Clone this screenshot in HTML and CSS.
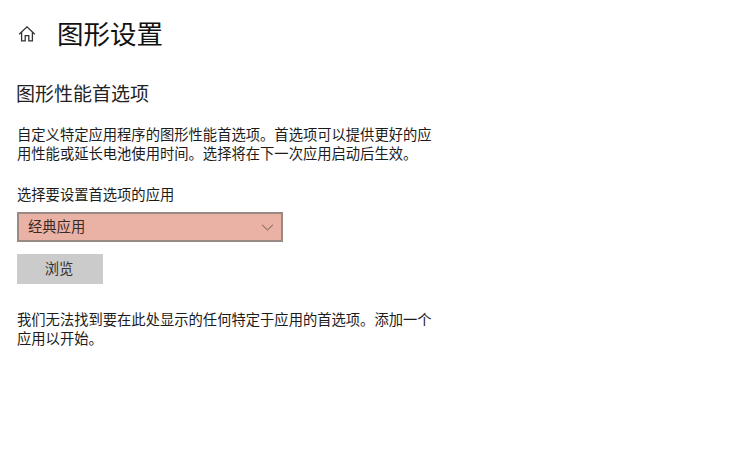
FILE: index.html
```html
<!DOCTYPE html>
<html lang="zh-CN">
<head>
<meta charset="utf-8">
<title>图形设置</title>
<link rel="stylesheet" href="styles.css">
</head>
<body>
<main class="page">
  <header class="title-row">
    <svg class="home" viewBox="0 0 18 18" width="18" height="18" aria-hidden="true">
      <path d="M1.2 9.2 9 1.8l7.8 7.4M3.6 7.2v8.6h3.6v-5.2h3.6v5.2h3.6V7.2" fill="none" stroke="#333" stroke-width="1.3"/>
    </svg>
    <h1 class="title">图形设置</h1>
  </header>
  <h2 class="heading">图形性能首选项</h2>
  <p class="text intro">自定义特定应用程序的图形性能首选项。首选项可以提供更好的应用性能或延长电池使用时间。选择将在下一次应用启动后生效。</p>
  <label class="label">选择要设置首选项的应用</label>
  <div class="select">
    <span class="select-text">经典应用</span>
    <svg class="chevron" viewBox="0 0 12 7" width="13" height="7" aria-hidden="true">
      <path d="M.6.8 6 6 11.4.8" fill="none" stroke="#6e5550" stroke-width="1"/>
    </svg>
  </div>
  <div class="button">浏览</div>
  <p class="text note">我们无法找到要在此处显示的任何特定于应用的首选项。添加一个应用以开始。</p>
</main>
</body>
</html>
```
FILE: styles.css
```css
html, body {
  margin: 0;
  background: #fff;
}
body {
  font-family: "Noto Sans CJK SC", "Liberation Sans", sans-serif;
  color: #1c1c1c;
  width: 729px;
  height: 450px;
  overflow: hidden;
}
.page {
  display: flex;
  flex-direction: column;
  align-items: flex-start;
  padding: 15px 0 0 17px;
}
.title-row {
  display: flex;
  align-items: center;
  height: 36px;
}
.home {
  margin-right: 21px;
  margin-top: 1px;
  margin-left: 1px;
}
.title {
  margin: 0;
  font-size: 26.5px;
  font-weight: 400;
  line-height: 36px;
  color: #111;
}
.heading {
  margin: 28px 0 0 -1px;
  font-size: 19px;
  font-weight: 400;
  line-height: 28px;
  color: #222;
}
.text {
  margin: 0;
  width: 416px;
  font-size: 14.3px;
  line-height: 19px;
}
.intro {
  margin-top: 17px;
}
.label {
  margin-top: 22px;
  font-size: 14.3px;
  line-height: 20px;
}
.select {
  box-sizing: border-box;
  display: flex;
  align-items: center;
  justify-content: space-between;
  width: 266px;
  height: 30px;
  margin-top: 8px;
  padding: 0 7px 4px 9px;
  background: #e9b2a5;
  border: 2px solid #9a8a84;
  font-size: 14.3px;
  color: #3a2a26;
}
.chevron {
  margin-top: 4px;
}
.button {
  box-sizing: border-box;
  display: flex;
  align-items: center;
  justify-content: center;
  width: 86px;
  height: 30px;
  margin-top: 12px;
  padding: 0 2px 3px 0;
  background: #cbcbcb;
  font-size: 14.3px;
  color: #333;
}
.note {
  margin-top: 25px;
}
```
